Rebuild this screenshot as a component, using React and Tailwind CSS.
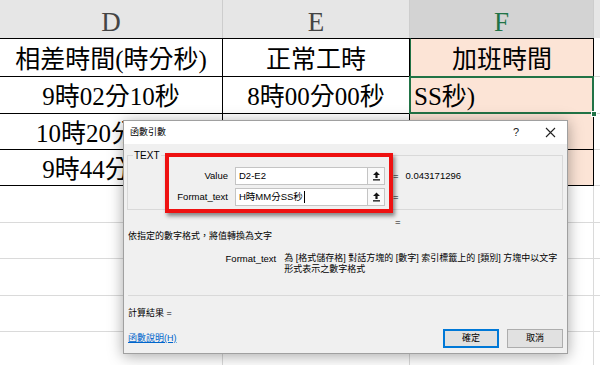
import React from "react";

function UpIcon() {
  return (
    <svg width="9" height="10" viewBox="0 0 9 10">
      <path d="M4.5 0.5 L8 4 L5.6 4 L5.6 7 L3.4 7 L3.4 4 L1 4 Z" fill="#111" />
      <rect x="1" y="8.2" width="7" height="1.3" fill="#111" />
    </svg>
  );
}

function Cell({ children, className = "" }) {
  return (
    <div
      className={
        "flex items-center justify-center pt-[3px] text-[25px] leading-none whitespace-nowrap overflow-hidden " +
        className
      }
    >
      {children}
    </div>
  );
}

export default function App() {
  const emptyRows = [37, 36, 37, 36, 37];
  return (
    <div className="relative w-[600px] h-[365px] overflow-hidden bg-white font-['Liberation_Serif','Noto_Sans_CJK_TC',serif] text-black">
      {/* column header */}
      <div className="grid grid-cols-[223px_187px_184px_6px] h-[38px] bg-[#e6e6e6] text-[27px] leading-none text-[#444]">
        <div className="flex items-center justify-center pt-[6px] border-r border-[#cdcdcd]">D</div>
        <div className="flex items-center justify-center pt-[6px] border-r border-[#cdcdcd]">E</div>
        <div className="flex items-center justify-center pt-[6px] border-r border-[#cdcdcd] bg-[#d3d3d3] text-[#217346]">F</div>
        <div />
      </div>

      {/* row 1 */}
      <div className="grid grid-cols-[223px_187px_184px_6px] h-[39px]">
        <Cell className="border-y border-r border-black">相差時間(時分秒)</Cell>
        <Cell className="border-y border-r border-black">正常工時</Cell>
        <Cell className="border-y border-r border-l border-l-[#217346] border-black bg-[#fce4d6]">加班時間</Cell>
        <div className="border-b border-[#dadada]" />
      </div>

      {/* row 2 */}
      <div className="grid grid-cols-[223px_187px_184px_6px] h-[37px]">
        <Cell className="border-b border-r border-black">9時02分10秒</Cell>
        <Cell className="border-b border-r border-black">8時00分00秒</Cell>
        <div className="relative flex items-center justify-start pl-[4px] pt-[3px] text-[25px] leading-none whitespace-nowrap bg-[#fce4d6] border-b border-r border-black">
          SS秒)
          <div className="absolute -left-px -top-px -right-px -bottom-px border-2 border-[#217346]" />
          <div className="absolute -right-[4px] -bottom-[4px] w-[6px] h-[6px] bg-[#217346] border border-white" />
        </div>
        <div className="border-b border-[#dadada]" />
      </div>

      {/* row 3 */}
      <div className="grid grid-cols-[223px_187px_184px_6px] h-[36px]">
        <Cell className="border-b border-r border-black">10時20分15秒</Cell>
        <div className="border-b border-r border-black" />
        <div className="bg-[#fce4d6] border-b border-r border-black" />
        <div className="border-b border-[#dadada]" />
      </div>

      {/* row 4 */}
      <div className="grid grid-cols-[223px_187px_184px_6px] h-[36px]">
        <Cell className="border-b border-r border-black">9時44分30秒</Cell>
        <div className="border-b border-r border-black" />
        <div className="bg-[#fce4d6] border-b border-r border-black" />
        <div className="border-b border-[#dadada]" />
      </div>

      {emptyRows.map((h, i) => (
        <div
          key={i}
          className={
            "grid grid-cols-[223px_187px_184px_6px] " + (h === 37 ? "h-[37px]" : "h-[36px]")
          }
        >
          <div className="border-b border-r border-[#dadada]" />
          <div className="border-b border-r border-[#dadada]" />
          <div className="border-b border-r border-[#dadada]" />
          <div className="border-b border-[#dadada]" />
        </div>
      ))}

      {/* dialog */}
      <div className="absolute left-[123px] top-[120px] w-[445px] h-[234px] bg-[#f0f0f0] border border-[#a0a0a0] shadow-[0_2px_14px_rgba(0,0,0,0.35)] flex flex-col font-['Liberation_Sans','Noto_Sans_CJK_TC',sans-serif] text-[9.5px] leading-none text-black">
        <div className="h-[23px] bg-white flex items-center pl-[6px] shrink-0">
          <span className="text-[9px]">函數引數</span>
          <span className="ml-auto w-[10px] text-center text-[11px] text-[#222]">?</span>
          <span className="ml-[24px] mr-[11px] flex items-center">
            <svg width="11" height="11" viewBox="0 0 11 11">
              <path d="M1 1 L10 10 M10 1 L1 10" stroke="#222" strokeWidth="1.1" fill="none" />
            </svg>
          </span>
        </div>

        <div className="flex flex-col pl-[3px] pr-[4px]">
          {/* group box */}
          <div className="relative mt-[11px] h-[55px] border border-[#d9d9d9] flex flex-col pt-[11px] gap-[3px]">
            <span className="absolute -top-[5px] left-[5px] px-[1px] bg-[#f0f0f0] text-[10px] leading-none">TEXT</span>
            <div className="flex items-center h-[18px]">
              <span className="w-[100px] text-right">Value</span>
              <div className="ml-[7px] w-[150px] h-[18px] bg-white border border-[#c4c4c4] flex items-center">
                <span className="flex-1 pl-[3px]">D2-E2</span>
                <span className="w-[17px] h-full border-l border-[#c4c4c4] bg-[#f9f9f9] flex items-center justify-center">
                  <UpIcon />
                </span>
              </div>
              <span className="ml-[8px]">=</span>
              <span className="ml-[7px]">0.043171296</span>
            </div>
            <div className="flex items-center h-[18px]">
              <span className="w-[100px] text-right">Format_text</span>
              <div className="ml-[7px] w-[150px] h-[18px] bg-white border border-[#c4c4c4] flex items-center">
                <span className="flex-1 pl-[3px] flex items-center">
                  H時MM分SS秒<span className="inline-block w-px h-[12px] bg-black ml-px" />
                </span>
                <span className="w-[17px] h-full border-l border-[#c4c4c4] bg-[#f9f9f9] flex items-center justify-center">
                  <UpIcon />
                </span>
              </div>
              <span className="ml-[8px]">=</span>
            </div>
          </div>

          <div className="mt-[7px] h-[10px] flex items-center">
            <span className="ml-[268px]">=</span>
          </div>

          <div className="mt-[4px] h-[11px] flex items-center pl-[1px] text-[9px]">
            依指定的數字格式，將值轉換為文字
          </div>

          <div className="mt-[11px] flex">
            <span className="w-[151px] text-right leading-[11px]">Format_text</span>
            <span className="ml-[8px] w-[282px] text-[9px] leading-[11px]">
              為 [格式儲存格] 對話方塊的 [數字] 索引標籤上的 [類別] 方塊中以文字形式表示之數字格式
            </span>
          </div>

          <div className="mt-[20px] ml-[1px] h-px bg-[#d9d9d9]" />

          <div className="mt-[12px] h-[11px] flex items-center pl-[1px] text-[9px]">
            計算結果 =
          </div>

          <div className="mt-[10px] h-[19px] flex items-center">
            <span className="pl-[1px] text-[9px] text-[#0066cc] underline">函數說明(H)</span>
            <button className="ml-auto w-[56px] h-[19px] bg-[#e1e1e1] border-2 border-[#0078d7] text-[9px] flex items-center justify-center">
              確定
            </button>
            <button className="ml-[8px] w-[56px] h-[19px] bg-[#e1e1e1] border border-[#adadad] text-[9px] flex items-center justify-center">
              取消
            </button>
          </div>
        </div>
      </div>

      {/* red annotation box */}
      <div className="absolute left-[165px] top-[153px] w-[228px] h-[60px] border-[4px] border-[#ee1111] shadow-[2px_3px_4px_rgba(0,0,0,0.45)]" />
    </div>
  );
}
